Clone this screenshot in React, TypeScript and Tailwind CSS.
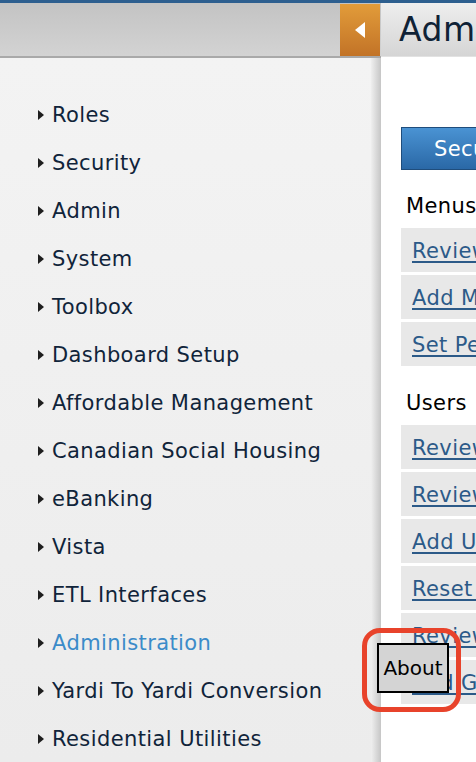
import React from "react";

const menu = [
  "Roles",
  "Security",
  "Admin",
  "System",
  "Toolbox",
  "Dashboard Setup",
  "Affordable Management",
  "Canadian Social Housing",
  "eBanking",
  "Vista",
  "ETL Interfaces",
  "Administration",
  "Yardi To Yardi Conversion",
  "Residential Utilities",
];

const menusLinks = ["Review Menus", "Add Menu", "Set Permissions"];
const usersLinks = ["Review Users", "Review User Roles", "Add User", "Reset Password", "Review Groups", "Add Group"];

function Row({ label }: { label: string }) {
  return (
    <div className="h-[44px] bg-[#e8e8e8] pl-[11px] pt-[1px] flex items-center whitespace-nowrap">
      <span className="text-[21px] leading-[24px] tracking-[0.4px] text-[#2c5a88] underline underline-offset-[3px] decoration-[2px]">{label}</span>
    </div>
  );
}

export default function App() {
  return (
    <div
      className="relative w-[476px] h-[762px] overflow-hidden bg-white"
      style={{ fontFamily: '"DejaVu Sans", Verdana, sans-serif' }}
    >
      <div className="h-[3px] bg-[#2d5f8f]" />
      <div className="flex w-[700px] h-[759px]">
        {/* left column */}
        <div className="w-[381px] flex flex-col shrink-0">
          <div className="h-[55px] flex justify-end bg-gradient-to-b from-[#c3c3c3] to-[#d3d3d3] border-b-[2px] border-[#a9a9a9]">
            <div className="mt-[1px] mr-[1px] w-[40px] h-[52px] bg-gradient-to-b from-[#e29c3a] to-[#c27327] flex items-center justify-center">
              <svg width="10" height="16" viewBox="0 0 10 16">
                <path d="M10 0 L0 8 L10 16 Z" fill="#ffffff" />
              </svg>
            </div>
          </div>
          <div className="flex-1 flex bg-gradient-to-b from-[#f3f3f3] to-[#ececec]">
            <div className="flex-1 flex flex-col pt-[33px] pl-[38px]">
              {menu.map((m) => (
                <div key={m} className="h-[48px] flex items-center gap-[8px] whitespace-nowrap">
                  <svg width="6" height="10" viewBox="0 0 6 10">
                    <path d="M0 0 L6 5 L0 10 Z" fill="#1e1e1e" />
                  </svg>
                  <span
                    className={
                      "text-[21px] leading-[24px] tracking-[0.4px] " +
                      (m === "Administration" ? "text-[#3b8bc9]" : "text-[#10243a]")
                    }
                  >
                    {m}
                  </span>
                </div>
              ))}
            </div>
            <div className="w-[10px] bg-gradient-to-r from-[#efefef] to-[#c6c6c6]" />
          </div>
        </div>
        {/* right column */}
        <div className="w-[319px] flex flex-col">
          <div className="h-[54px] bg-gradient-to-b from-[#eeeeee] to-[#d5d5d5] border-b border-[#e2e2e2] flex items-center pl-[18px]">
            <span className="text-[33px] leading-[40px] tracking-[0.5px] text-[#0f2236] whitespace-nowrap">Administration</span>
          </div>
          <div className="pl-[20px] pt-[70px] flex flex-col">
            <div className="h-[43px] border border-[#1f4d7c] bg-gradient-to-b from-[#4a93d3] to-[#2a68a6] flex items-center pl-[32px]">
              <span className="text-[21px] leading-[24px] tracking-[0.4px] text-white whitespace-nowrap">Security</span>
            </div>
            <div className="h-[58px] pt-[24px] pl-[5px]">
              <span className="text-[21px] leading-[24px] tracking-[0.4px] text-black">Menus</span>
            </div>
            <div className="flex flex-col gap-[3px]">
              {menusLinks.map((l) => (
                <Row key={l} label={l} />
              ))}
            </div>
            <div className="h-[59px] pt-[25px] pl-[5px]">
              <span className="text-[21px] leading-[24px] tracking-[0.4px] text-black">Users</span>
            </div>
            <div className="flex flex-col gap-[3px]">
              {usersLinks.map((l) => (
                <Row key={l} label={l} />
              ))}
            </div>
          </div>
        </div>
      </div>
      {/* tooltip */}
      <div className="absolute left-[377px] top-[643px] w-[72px] h-[50px] bg-[#d4d4d4] border-[2px] border-black flex items-center justify-center">
        <span className="text-[20px] leading-[24px] text-black">About</span>
      </div>
      <div className="absolute left-[362px] top-[628px] w-[99px] h-[84px] border-[5px] border-[#e8432b] rounded-[18px]" />
    </div>
  );
}
